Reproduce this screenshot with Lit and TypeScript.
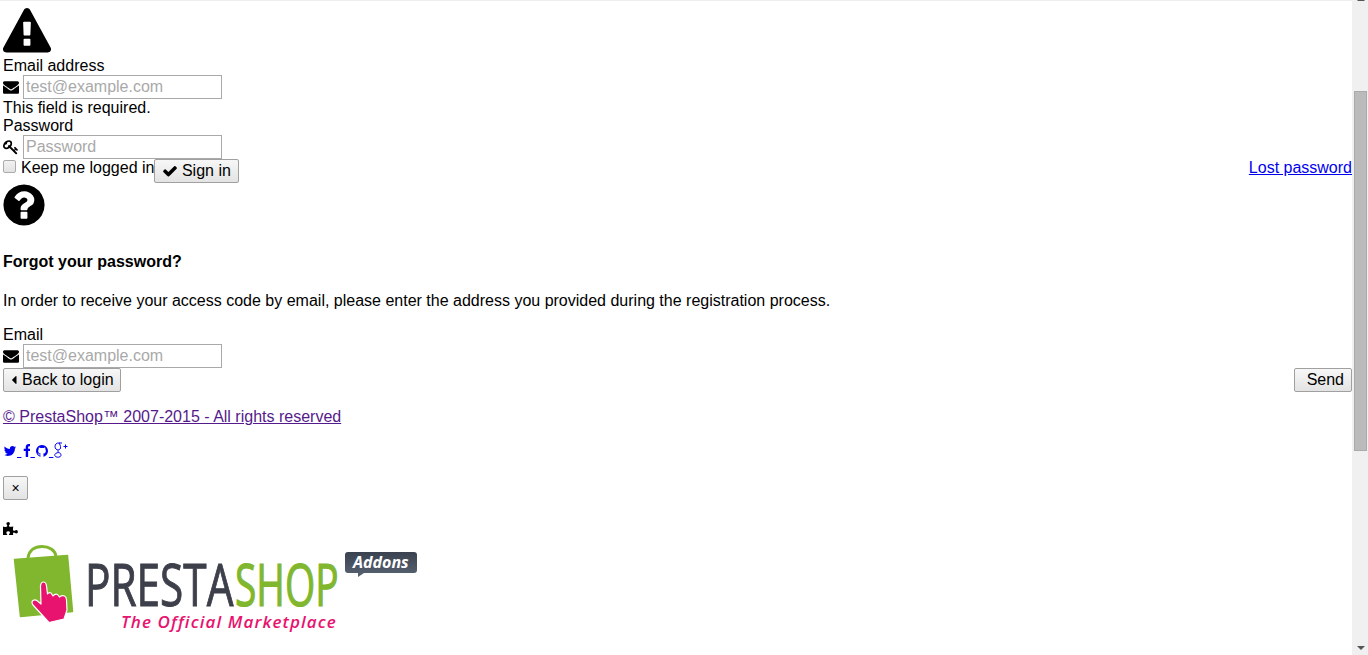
import { LitElement, html, css, svg } from "lit";
import { customElement } from "lit/decorators.js";

const P = {
  warn: "M1024 1375v-190q0-14-9.5-23.5t-22.5-9.5h-192q-13 0-22.5 9.5t-9.5 23.5v190q0 14 9.5 23.5t22.5 9.5h192q13 0 22.5-9.5t9.5-23.5zm-2-374l18-459q0-12-10-19-13-11-24-11h-220q-11 0-24 11-10 7-10 21l17 457q0 10 10 16.5t24 6.5h185q14 0 23.5-6.5t10.5-16.5zm-14-934l768 1408q35 63-2 126-17 29-46.5 46t-63.5 17h-1536q-34 0-63.5-17t-46.5-46q-37-63-2-126l768-1408q17-31 47-49t65-18 65 18 47 49z",
  mail: "M1792 710v794q0 66-47 113t-113 47h-1472q-66 0-113-47t-47-113v-794q44 49 101 87 362 246 497 345 57 42 92.5 65.5t94.5 48 110 24.5h2q51 0 110-24.5t94.5-48 92.5-65.5q170-123 498-345 57-39 100-87zm0-294q0 79-49 151t-122 123q-376 261-468 325-10 7-42.5 30.5t-54 38-52 32.5-57.5 27-50 9h-2q-23 0-50-9t-57.5-27-52-32.5-54-38-42.5-30.5q-91-64-262-182.5t-205-142.5q-62-42-117-115.5t-55-136.5q0-78 41.5-130t118.5-52h1472q65 0 112.5 47t47.5 113z",
  key: "M832 512q0-80-56-136t-136-56-136 56-56 136q0 42 19 83-41-19-83-19-80 0-136 56t-56 136 56 136 136 56 136-56 56-136q0-42-19-83 41 19 83 19 80 0 136-56t56-136zm851 704q0 17-49 66t-66 49q-9 0-28.5-16t-36.5-33-38.5-40-24.5-26l-96 96 220 220q28 28 28 68 0 42-39 81t-81 39q-40 0-68-28l-671-671q-176 131-365 131-163 0-265.5-102.5t-102.5-265.5q0-160 95-313t248-248 313-95q163 0 265.5 102.5t102.5 265.5q0 189-131 365l355 355 96-96q-3-3-26-24.5t-40-38.5-33-36.5-16-28.5q0-17 49-66t66-49q13 0 23 10 6 6 46 44.5t82 79.5 86.5 86 73 78 28.5 41z",
  check: "M1671 566q0 40-28 68l-724 724-136 136q-28 28-68 28t-68-28l-136-136-362-362q-28-28-28-68t28-68l136-136q28-28 68-28t68 28l294 295 656-657q28-28 68-28t68 28l136 136q28 28 28 68z",
  question: "M1024 1376v-192q0-14-9-23t-23-9h-192q-14 0-23 9t-9 23v192q0 14 9 23t23 9h192q14 0 23-9t9-23zm256-672q0-88-55.5-163t-138.5-116-170-41q-243 0-371 213-15 24 8 42l132 100q7 6 19 6 16 0 25-12 53-68 86-92 34-24 86-24 48 0 85.5 26t37.5 59q0 38-20 61t-68 45q-63 28-115.5 86.5t-52.5 125.5v36q0 14 9 23t23 9h192q14 0 23-9t9-23q0-19 21.5-49.5t54.5-49.5q32-18 49-28.5t46-35 44.5-48 28-60.5 12.5-81zm384 192q0 209-103 385.5t-279.5 279.5-385.5 103-385.5-103-279.5-279.5-103-385.5 103-385.5 279.5-279.5 385.5-103 385.5 103 279.5 279.5 103 385.5z",
  twitter: "M1684 408q-67 98-162 167 1 14 1 42 0 130-38 259.5t-115.5 248.5-184.5 210.5-258 146-323 54.5q-271 0-496-145 35 4 78 4 225 0 401-138-105-2-188-64.5t-114-159.5q33 5 61 5 43 0 85-11-112-23-185.5-111.5t-73.5-205.5v-4q68 38 146 41-66-44-105-115t-39-154q0-88 44-163 121 149 294.5 238.5t371.5 99.5q-8-38-8-74 0-134 94.5-228.5t228.5-94.5q140 0 236 102 109-21 205-78-37 115-142 178 91-10 187-52z",
  facebook: "M1343 12v264h-157q-86 0-116 36t-30 108v189h293l-39 296h-254v759h-306v-759h-255v-296h255v-218q0-186 104-288.5t277-102.5q147 0 228 12z",
  github: "M896 128q209 0 385.5 103t279.5 279.5 103 385.5q0 251-146.5 451.5t-378.5 274.5q-27 5-40-7t-13-30q0-3 .5-76.5t.5-134.5q0-97-52-142 57-6 102.5-18t94-39 81-66.5 53-105 20.5-150.5q0-119-79-206 37-91-8-204-28-9-81 11t-92 44l-38 24q-93-26-192-26t-192 26q-16-11-42.5-27t-83.5-38.5-85-13.5q-45 113-8 204-79 87-79 206 0 85 20.5 150t52.5 105 80.5 67 94 39 102.5 18q-39 36-49 103-21 10-45 15t-57 5-65.5-21.5-55.5-62.5q-19-32-48.5-52t-49.5-24l-20-3q-21 0-29 4.5t-5 11.5 9 14 13 12l7 5q22 10 43.5 38t31.5 51l10 23q13 38 44 61.5t67 30 69.5 7 55.5-3.5l23-4q0 38 .5 88.5t.5 54.5q0 18-13 30t-40 7q-232-74-378.5-274.5t-146.5-451.5q0-209 103-385.5t279.5-279.5 385.5-103z",
  puzzle: "M1664 1098q0 81-44.5 135t-123.5 54q-41 0-77.5-17.5t-59-38-56.5-38-71-17.5q-110 0-110 124 0 39 16 115t15 115v5q-22 0-33 1-34 3-97.5 11.5t-115.5 13.5-98 5q-61 0-103-26.5t-42-83.5q0-37 17.5-71t38-56.5 38-59 17.5-77.5q0-79-54-123.5t-135-44.5q-84 0-143 45.5t-59 127.5q0 43 15 83t33.5 64.5 33.5 53 15 50.5q0 45-46 89-37 35-117 35-95 0-245-24-9-2-27.5-4t-27.5-4l-13-2q-1 0-3-1-2 0-2-1v-1024q2 1 17.5 3.5t34 5 21.5 3.5q150 24 245 24 80 0 117-35 46-44 46-89 0-22-15-50.5t-33.5-53-33.5-64.5-15-83q0-82 59-127.5t144-45.5q80 0 134 44.5t54 123.5q0 41-17.5 77.5t-38 59-38 56.5-17.5 71q0 57 42 83.5t103 26.5q64 0 180-15t163-17v2q-1 2-3.5 17.5t-5 34-3.5 21.5q-24 150-24 245 0 80 35 117 44 46 89 46 22 0 50.5-15t53-33.5 64.5-33.5 83-15q82 0 127.5 59t45.5 143z",
  caret: "M1216 448v896q0 26-19 45t-45 19-45-19l-448-448q-19-19-19-45t19-45l448-448q19-19 45-19t45 19 19 45z",
};

const icon = (d: string, cls: string, vb = "0 0 1792 1792") =>
  html`<svg class=${cls} viewBox=${vb} fill="currentColor"><path d=${d}></path></svg>`;

@customElement("app-root")
export class AppRoot extends LitElement {
  static styles = css`
    :host { display: flex; height: 655px; overflow: hidden; font-family: "Liberation Sans", Arial, sans-serif; font-size: 16px; color: #000; background: #fff; }
    * { box-sizing: border-box; }
    .page { flex: 1; min-width: 0; border-top: 1px solid #eee; padding: 0 0 0 3px; }
    .scroll { width: 16px; flex: none; background: #f0f0f0; position: relative; }
    .thumb { position: absolute; left: 2px; right: 1px; top: 91px; height: 360px; background: #bbb; border: 1px solid #aaa; }
    .arrow { position: absolute; left: 5px; bottom: 5px; width: 0; height: 0; border: 4px solid transparent; border-top: 4px solid #555; border-bottom-width: 0; }
    .arrow-up { position: absolute; left: 5px; top: -3px; width: 0; height: 0; border: 4px solid transparent; border-bottom: 4px solid #555; border-top-width: 0; }
    .i { display: block; }
    .warn { width: 48px; height: 48px; margin-top: 7px; margin-bottom: 1px; }
    .label { height: 18px; line-height: 18px; }
    .field { display: flex; height: 24px; align-items: center; gap: 4px; }
    .small { width: 16px; height: 16px; flex: none; }
    input[type="text"] { width: 199px; height: 24px; border: 1px solid #a9a9a9; font: 16px "Liberation Sans", Arial, sans-serif; padding: 1px 2px; margin: 0; background: #fff; }
    input::placeholder { color: #a9a9a9; opacity: 1; }
    .row { display: flex; height: 24px; align-items: flex-start; }
    input[type="checkbox"] { width: 13px; height: 13px; margin: 1px 5px 0 0; appearance: none; border: 1px solid #aaa; border-radius: 2px; background: linear-gradient(#f2f2f2, #e2e2e2); flex: none; }
    .keep { line-height: 18px; }
    .signin { margin-left: -0.5px; }
    .btn { display: inline-flex; align-items: center; height: 24px; font: 16px "Liberation Sans", Arial, sans-serif; color: #000; border: 1px solid #a0a0a0; border-radius: 2px; background: linear-gradient(#f7f7f7, #e3e3e3); padding: 0 7px; margin-top: 0; margin-bottom: 0; gap: 4px; }
    .send { padding-left: 12px; }
    .backbtn { padding-right: 6px; }
    .back { width: 4.5px; height: 14px; flex: none; margin: 0 1.500px 0 1px; }
    .spacer { flex: 1; }
    a { color: #00e; }
    .visited { color: #551a8b; }
    .q { width: 48px; height: 48px; margin: -2px 0 0 -3px; }
    h4 { font-size: 16px; font-weight: bold; margin: 24px 0 0; line-height: 18px; }
    p { margin: 21px 0 0; line-height: 18px; }
    .p3 { margin: 16px 0 0; }
    .email { margin-top: 16px; }
    .social { margin: 16px 0 0; height: 18px; line-height: 18px; }
    .social svg { vertical-align: -2px; }
    .s14 { width: 14px; height: 14px; }
    .s9 { width: 9px; height: 14px; }
    .s16 { width: 16px; height: 16px; flex: none; }
    .gplus { width: 15px; height: 16px; }
    .close { display: flex; margin-top: 16px; height: 24px; width: 25px; padding: 0; justify-content: center; font-size: 14px; }
    .puzzle { height: 13px; overflow: hidden; margin-top: 22px; }
    .logo { display: block; margin-left: -3px; width: 430px; height: 100px; }
    .brand { font-family: "Open Sans", "Liberation Sans", sans-serif; }
    .tagline { font-style: italic; font-weight: 600; font-size: 17px; letter-spacing: 1.100px; }
    .addons { font-style: italic; font-weight: bold; font-size: 16px; }
  `;

  render() {
    return html`
      <main class="page">
        ${icon(P.warn, "i warn")}
        <div class="label">Email address</div>
        <div class="field">${icon(P.mail, "small")}<input type="text" placeholder="test@example.com" /></div>
        <div class="label">This field is required.</div>
        <div class="label">Password</div>
        <div class="field">${icon(P.key, "small")}<input type="text" placeholder="Password" /></div>
        <div class="row">
          <input type="checkbox" /><span class="keep">Keep me logged in</span>
          <button class="btn signin">${icon(P.check, "s16")}Sign in</button>
          <span class="spacer"></span>
          <a class="keep" href="#">Lost password</a>
        </div>
        ${icon(P.question, "i q")}
        <h4>Forgot your password?</h4>
        <p>In order to receive your access code by email, please enter the address you provided during the registration process.</p>
        <div class="label email">Email</div>
        <div class="field">${icon(P.mail, "small")}<input type="text" placeholder="test@example.com" /></div>
        <div class="row">
          <button class="btn backbtn">${icon(P.caret, "back", "640 0 576 1792")}Back to login</button>
          <span class="spacer"></span>
          <button class="btn send">Send</button>
        </div>
        <p class="p3"><a class="visited" href="#">© PrestaShop™ 2007-2015 - All rights reserved</a></p>
        <div class="social"><a href="#">${icon(P.twitter, "s14")}&nbsp;</a><a href="#">${icon(P.facebook, "s9", "128 0 1152 1792")}&nbsp;</a><a href="#">${icon(P.github, "s14")}&nbsp;</a><a href="#"><svg class="gplus" viewBox="0 0 15 16" fill="none" stroke="currentColor" stroke-width="1"><path d="M6.500 1C3.500 .5 2 2.500 2 4.500s1.500 3.500 3 3.500c2 0 2.800-1.500 2.500-3.500C7.200 2.500 6 1 6 1h3M5 8.500c-.8 1 .5 1.500 1.800 2.500s1.700 2.500.5 3.500c-1.500 1.200-5 1-5.500-1-.4-1.700 1.700-3 4-2.900M10.500 4.500h4M12.500 2.500v4"></path></svg></a></div>
        <button class="btn close">×</button>
        <div class="puzzle">${icon(P.puzzle, "s16")}</div>
        <svg class="logo" viewBox="0 535 430 100">
          <defs>
            <linearGradient id="tag" x1="0" y1="0" x2="0" y2="1"><stop offset="0" stop-color="#3a4250"></stop><stop offset="1" stop-color="#586372"></stop></linearGradient>
          </defs>
          <path d="M28 558C29 550 35 546.500 42 546.500C49 546.500 55 550 56 556" fill="none" stroke="#80b72e" stroke-width="3"></path>
          <path d="M14.500 559.500L67.500 555.500L72.500 611.500L20.500 616.500Z" fill="#80b72e" stroke="#80b72e" stroke-width="1.500" stroke-linejoin="round"></path>
          <path d="M40.500 586Q41 582 43.500 582Q46 582 46.500 586L47.500 594Q49 592 51 593L53 596Q55 593.500 57.500 594.500L59.500 597Q62 595 64.500 596Q66.500 597 66.500 600L67 610L64 619L49 622.500L33 605Q31 602 33 600.500Q35 599 37.500 601L41 604Z" fill="#e8126f" stroke="#fff" stroke-width="1.200" stroke-linejoin="round"></path>
          ${svg`<text class="brand" transform="translate(85 606) scale(0.73 1)" font-size="58" fill="#3d3f4a" stroke="#3d3f4a" stroke-width="1">PRESTA</text>
          <text class="brand" transform="translate(235 606) scale(0.67 1)" font-size="58" fill="#80b72e" stroke="#80b72e" stroke-width="1.200">SHOP</text>
          <text class="brand tagline" x="121" y="628" fill="#e8126f">The Official Marketplace</text>
          <path d="M348 552h66q3 0 3 3v15q0 3-3 3h-50l-6 4v-4h-10q-3 0-3-3v-15q0-3 3-3z" fill="url(#tag)"></path>
          <text class="brand addons" x="353" y="568" fill="#fff">Addons</text>`}
        </svg>
      </main>
      <aside class="scroll"><div class="arrow-up"></div><div class="thumb"></div><div class="arrow"></div></aside>
    `;
  }
}
